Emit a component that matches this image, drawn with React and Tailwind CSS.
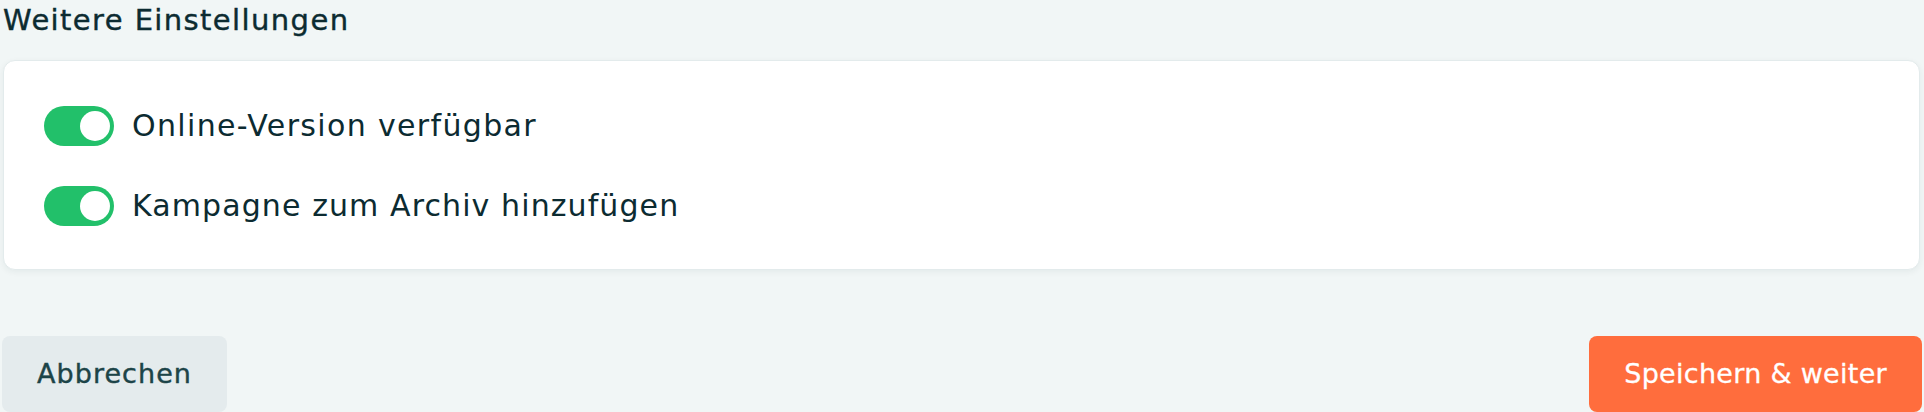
import React from "react";

function Toggle() {
  return (
    <div className="flex h-[40px] w-[70px] shrink-0 items-center justify-end rounded-full bg-[#22c06a] pr-[4px]">
      <div className="h-[30px] w-[30px] rounded-full bg-white" />
    </div>
  );
}

export default function App() {
  const font = { fontFamily: '"DejaVu Sans", "Open Sans", sans-serif' };
  return (
    <div className="min-h-[412px] w-full bg-[#f1f6f6] pl-[3px] pr-[4px] text-[#0c2b31]" style={font}>
      <h2 className="pt-[1px] text-[29px] leading-[38px] tracking-[1.4px] text-[#0c2b31] [-webkit-text-stroke:0.4px_#0c2b31]">
        Weitere Einstellungen
      </h2>
      <div className="mt-[21px] flex flex-col gap-[40px] rounded-[12px] border border-[#e3ebec] bg-white pb-[43px] pl-[40px] pt-[45px] shadow-[0_2px_6px_rgba(15,45,51,0.06)]">
        <div className="flex items-center gap-[18px]">
          <Toggle />
          <span className="text-[30px] leading-[40px] tracking-[1.35px]">Online-Version verfügbar</span>
        </div>
        <div className="flex items-center gap-[18px]">
          <Toggle />
          <span className="text-[30px] leading-[40px] tracking-[1.1px]">Kampagne zum Archiv hinzufügen</span>
        </div>
      </div>
      <div className="mt-[66px] flex items-start justify-between">
        <button className="-ml-[1px] h-[76px] rounded-[8px] bg-[#e4ebed] px-[35px] text-[27px] tracking-[1.05px] text-[#1c4448] [-webkit-text-stroke:0.4px_#1c4448]">
          Abbrechen
        </button>
        <button className="-mr-[2px] h-[76px] rounded-[8px] bg-[#ff6d3d] px-[35px] text-[27px] tracking-[0.3px] text-white [-webkit-text-stroke:0.3px_#ffffff]">
          Speichern &amp; weiter
        </button>
      </div>
    </div>
  );
}
